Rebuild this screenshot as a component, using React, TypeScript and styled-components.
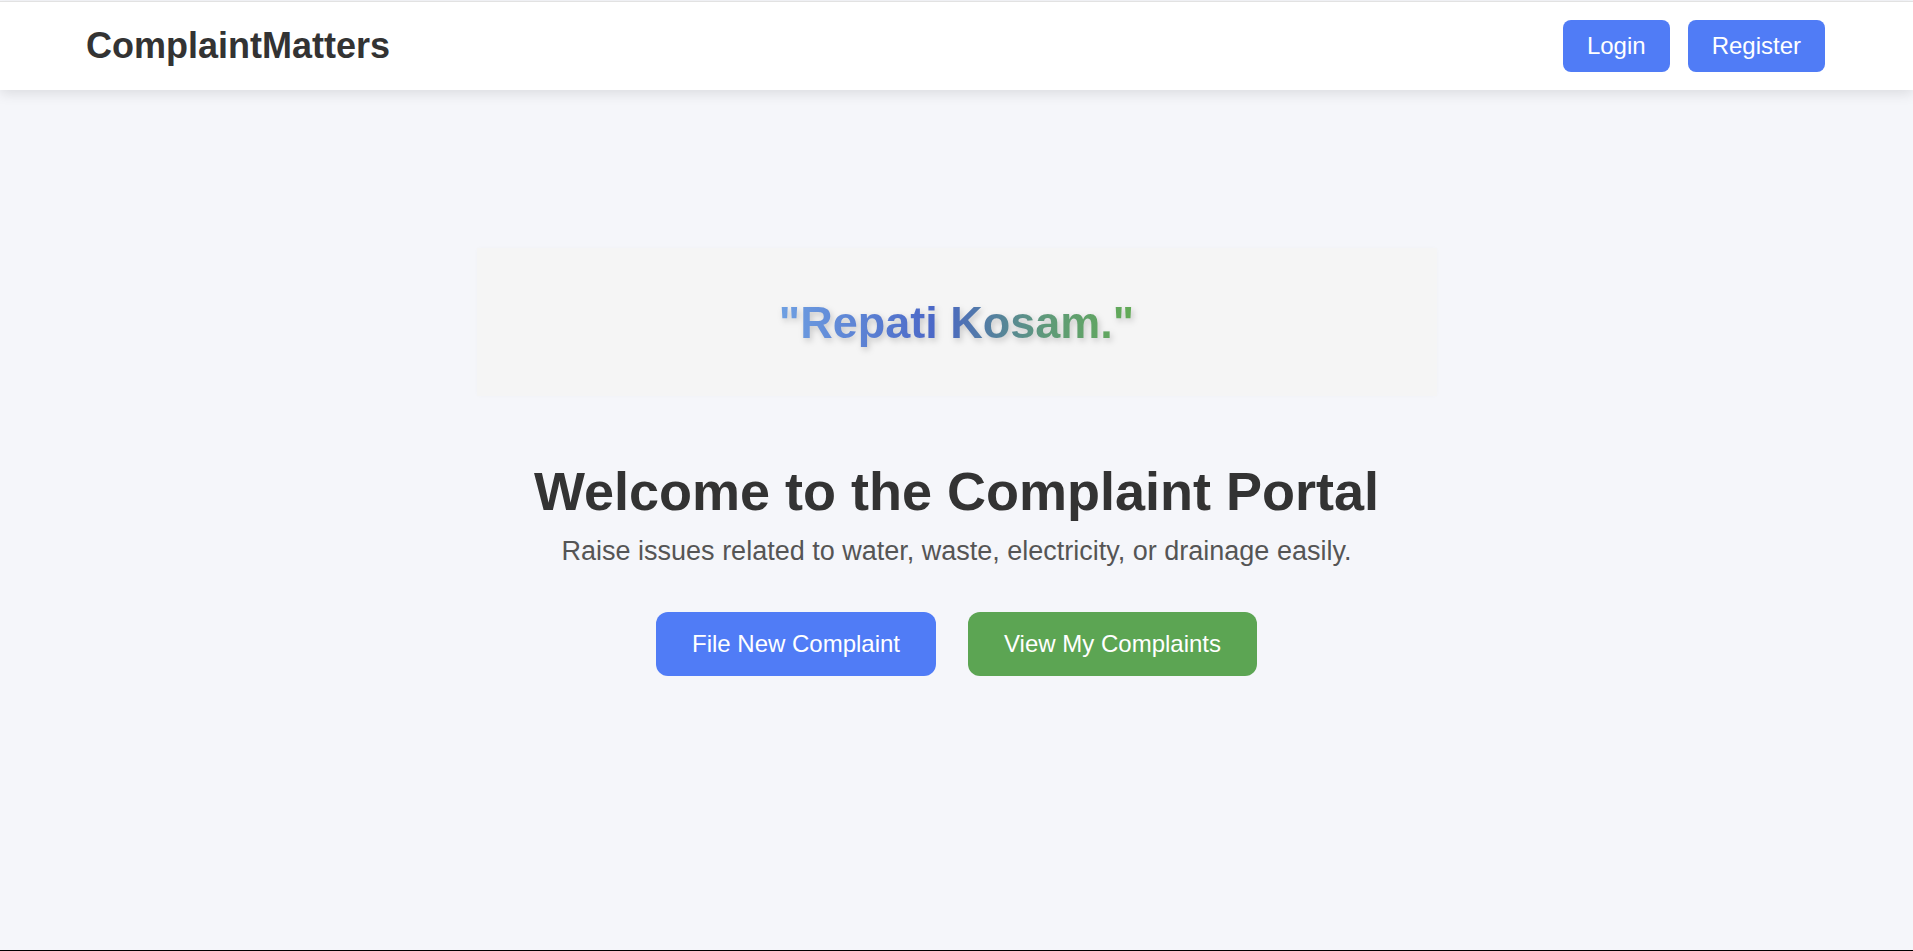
import styled, { createGlobalStyle } from 'styled-components';

const GlobalStyle = createGlobalStyle`
  * {
    box-sizing: border-box;
  }

  body {
    margin: 0;
    font-family: "Liberation Sans", Arial, sans-serif;
    background: #f5f6fa;
  }
`;

const Page = styled.div`
  min-height: 100vh;
  display: flex;
  flex-direction: column;
  background: #f5f6fa;
  border-bottom: 1px solid #000;
`;

const Header = styled.header`
  margin-top: 1px;
  border-top: 1px solid #e2e2e2;
  background: #ffffff;
  box-shadow: 0 4px 12px rgba(0, 0, 0, 0.1);
  padding: 18px 88px 18px 86px;
  display: flex;
  justify-content: space-between;
  align-items: center;
  position: relative;
  z-index: 1;
`;

const Logo = styled.div`
  font-size: 36px;
  font-weight: 700;
  color: #333333;
`;

const Nav = styled.nav`
  display: flex;
  gap: 18px;
`;

const Button = styled.button<{ $variant?: 'blue' | 'green'; $size?: 'sm' | 'lg' }>`
  font-family: "Liberation Sans", Arial, sans-serif;
  font-size: 24px;
  line-height: 1.15;
  color: #ffffff;
  border: none;
  cursor: pointer;
  background: ${p => (p.$variant === 'green' ? '#5ca553' : '#507cf6')};
  padding: ${p => (p.$size === 'lg' ? '18px 36px' : '12px 24px')};
  border-radius: ${p => (p.$size === 'lg' ? '12px' : '8px')};
`;

const Main = styled.main`
  flex: 1;
  display: flex;
  flex-direction: column;
  align-items: center;
  padding-top: 158px;
`;

const QuoteBox = styled.div`
  width: 960px;
  padding: 49px 20px 48px;
  background: #f5f5f5;
  box-shadow: 0 0 4px rgba(0, 0, 0, 0.02);
  text-align: center;
`;

const Quote = styled.span`
  display: inline-block;
  font-size: 45px;
  font-weight: 700;
  line-height: 1.15;
  background: linear-gradient(90deg, #6fa0e2 0%, #4a66c6 45%, #5f9a7a 75%, #62ab55 100%);
  -webkit-background-clip: text;
  background-clip: text;
  color: transparent;
  filter: drop-shadow(2px 3px 3px rgba(0, 0, 0, 0.18));
`;

const Title = styled.h1`
  margin: 64px 0 0;
  font-size: 54px;
  font-weight: 700;
  color: #333333;
  line-height: normal;
`;

const Subtitle = styled.p`
  margin: 14px 0 0;
  font-size: 27px;
  color: #555555;
  line-height: normal;
`;

const Actions = styled.div`
  margin-top: 45px;
  display: flex;
  gap: 32px;
`;

export default function App() {
  return (
    <>
      <GlobalStyle />
      <Page>
        <Header>
          <Logo>ComplaintMatters</Logo>
          <Nav>
            <Button $variant="blue">Login</Button>
            <Button $variant="blue">Register</Button>
          </Nav>
        </Header>
        <Main>
          <QuoteBox>
            <Quote>"Repati Kosam."</Quote>
          </QuoteBox>
          <Title>Welcome to the Complaint Portal</Title>
          <Subtitle>Raise issues related to water, waste, electricity, or drainage easily.</Subtitle>
          <Actions>
            <Button $variant="blue" $size="lg">File New Complaint</Button>
            <Button $variant="green" $size="lg">View My Complaints</Button>
          </Actions>
        </Main>
      </Page>
    </>
  );
}
